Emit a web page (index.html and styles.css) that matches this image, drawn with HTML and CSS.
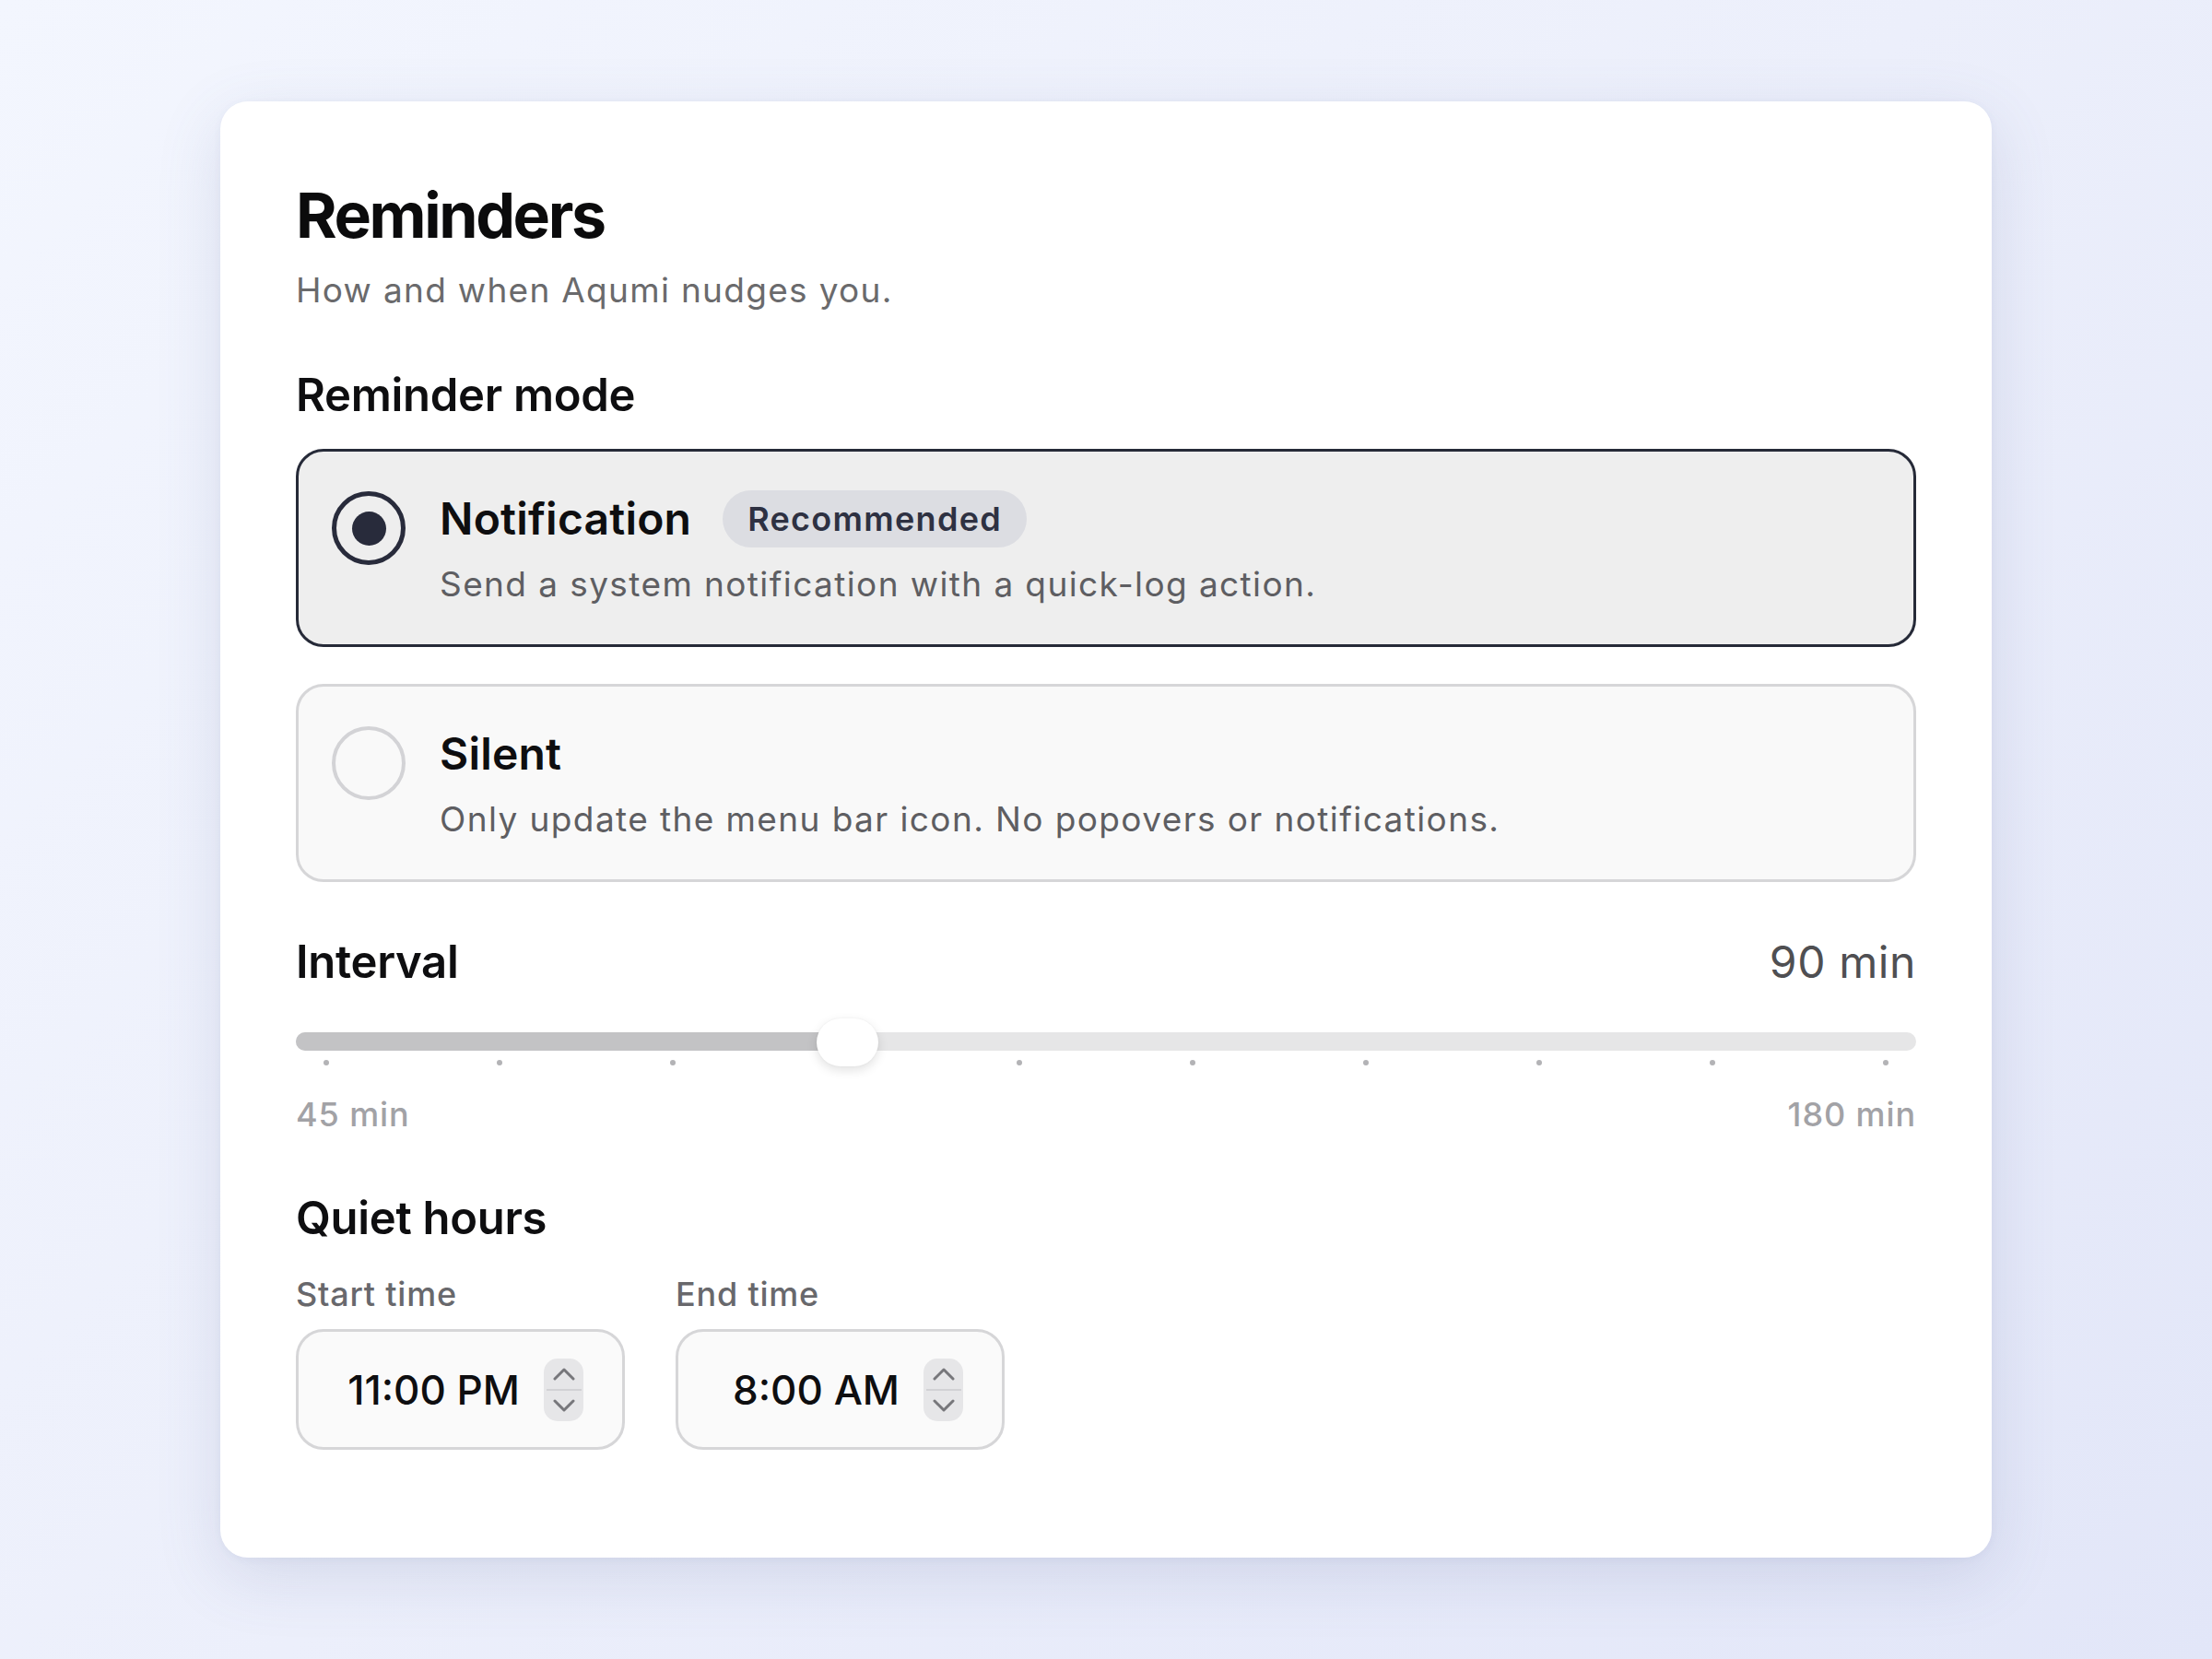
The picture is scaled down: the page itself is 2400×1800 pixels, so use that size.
FILE: index.html
```html
<!DOCTYPE html>
<html lang="en">
<head>
<meta charset="utf-8">
<title>Reminders</title>
<link rel="stylesheet" href="styles.css">
</head>
<body>
<main class="page">
  <section class="card">
    <h1 class="title">Reminders</h1>
    <p class="subtitle">How and when Aqumi nudges you.</p>

    <h2 class="section-title mode-title">Reminder mode</h2>
    <div class="options">
      <div class="option selected">
        <span class="radio"><span class="dot"></span></span>
        <div class="option-text">
          <div class="option-head">
            <span class="option-name">Notification</span>
            <span class="badge">Recommended</span>
          </div>
          <p class="option-desc">Send a system notification with a quick-log action.</p>
        </div>
      </div>
      <div class="option">
        <span class="radio"></span>
        <div class="option-text">
          <div class="option-head">
            <span class="option-name">Silent</span>
          </div>
          <p class="option-desc">Only update the menu bar icon. No popovers or notifications.</p>
        </div>
      </div>
    </div>

    <div class="interval-head">
      <h2 class="section-title">Interval</h2>
      <span class="interval-value">90 min</span>
    </div>
    <div class="slider">
      <div class="track"><div class="fill" style="width: 34%"></div></div>
      <div class="thumb" style="left: calc(34% - 33px)"></div>
      <div class="ticks">
        <span></span><span></span><span></span><span></span><span></span>
        <span></span><span></span><span></span><span></span><span></span>
      </div>
    </div>
    <div class="range-labels">
      <span>45 min</span>
      <span>180 min</span>
    </div>

    <h2 class="section-title quiet-title">Quiet hours</h2>
    <div class="times">
      <div class="time-field">
        <label class="time-label">Start time</label>
        <div class="time-box">
          <span class="time-value">11:00 PM</span>
          <span class="stepper">
            <svg class="chev" viewBox="0 0 24 14" width="24" height="14"><path d="M2 12 L12 2 L22 12" /></svg>
            <span class="divider"></span>
            <svg class="chev" viewBox="0 0 24 14" width="24" height="14"><path d="M2 2 L12 12 L22 2" /></svg>
          </span>
        </div>
      </div>
      <div class="time-field">
        <label class="time-label">End time</label>
        <div class="time-box">
          <span class="time-value">8:00 AM</span>
          <span class="stepper">
            <svg class="chev" viewBox="0 0 24 14" width="24" height="14"><path d="M2 12 L12 2 L22 12" /></svg>
            <span class="divider"></span>
            <svg class="chev" viewBox="0 0 24 14" width="24" height="14"><path d="M2 2 L12 12 L22 2" /></svg>
          </span>
        </div>
      </div>
    </div>
  </section>
</main>
</body>
</html>
```

FILE: styles.css
```css
* { box-sizing: border-box; }

html, body {
  margin: 0;
  padding: 0;
}

body {
  font-family: "Inter", "Liberation Sans", sans-serif;
  background: linear-gradient(135deg, #f3f6fe 0%, #eceffb 50%, #e2e6f8 100%);
  color: #0f0f10;
}

.page {
  width: 2400px;
  height: 1800px;
  display: flex;
  align-items: center;
  justify-content: center;
}

.card {
  width: 1922px;
  height: 1580px;
  background: #ffffff;
  border-radius: 30px;
  padding: 83px 82px 0 82px;
  box-shadow: 0 20px 70px rgba(90, 100, 150, 0.16), 0 2px 8px rgba(90, 100, 150, 0.06);
}

.title {
  margin: 0;
  font-size: 68px;
  line-height: 80px;
  font-weight: 700;
  letter-spacing: -2.4px;
  color: #0b0b0c;
}

.subtitle {
  margin: 18px 0 0 0;
  font-size: 37px;
  line-height: 48px;
  color: #6a6a6c;
  font-weight: 400;
  letter-spacing: 1.3px;
}

.section-title {
  margin: 0;
  font-size: 49px;
  line-height: 60px;
  font-weight: 600;
  letter-spacing: -0.3px;
  color: #0e0e10;
}

.mode-title { margin-top: 60px; }

.options {
  margin-top: 28px;
  display: flex;
  flex-direction: column;
  gap: 40px;
}

.option {
  height: 215px;
  border-radius: 30px;
  border: 3px solid #d6d6d8;
  background: #f9f9f9;
  padding: 42px 37px 0 36px;
  display: flex;
  align-items: flex-start;
  gap: 37px;
}

.option.selected {
  border-color: #262a38;
  background: #eeeeee;
}

.radio {
  flex: none;
  margin-top: 1px;
  width: 80px;
  height: 80px;
  border-radius: 50%;
  border: 4px solid #d3d3d6;
  display: flex;
  align-items: center;
  justify-content: center;
}

.option.selected .radio {
  border: 5px solid #282b3b;
}

.dot {
  width: 37px;
  height: 37px;
  border-radius: 50%;
  background: #282b3b;
}

.option-head {
  height: 62px;
  display: flex;
  align-items: center;
  gap: 34px;
}

.option-name {
  font-size: 48px;
  line-height: 62px;
  font-weight: 600;
  letter-spacing: 0.2px;
  color: #0e0e10;
}

.badge {
  height: 62px;
  padding: 0 27px;
  border-radius: 31px;
  background: #dcdde2;
  color: #2e3142;
  font-size: 36px;
  font-weight: 600;
  line-height: 62px;
  letter-spacing: 1.3px;
}

.option-desc {
  margin: 15px 0 0 0;
  font-size: 37px;
  line-height: 50px;
  color: #5e5e62;
  letter-spacing: 1.4px;
}

.interval-head {
  margin-top: 57px;
  display: flex;
  justify-content: space-between;
  align-items: baseline;
}

.interval-value {
  font-size: 48px;
  line-height: 60px;
  color: #4f4f52;
  font-weight: 400;
  letter-spacing: 0.6px;
}

.slider {
  position: relative;
  margin-top: 26px;
  height: 60px;
  padding-top: 20px;
}

.track {
  height: 20px;
  border-radius: 10px;
  background: #e6e6e7;
  overflow: hidden;
}

.fill {
  height: 100%;
  background: #c3c3c5;
}

.thumb {
  position: absolute;
  top: 5px;
  width: 67px;
  height: 52px;
  border-radius: 26px;
  background: #ffffff;
  box-shadow: 0 4px 12px rgba(0, 0, 0, 0.12), 0 0 2px rgba(0, 0, 0, 0.06);
}

.ticks {
  margin-top: 10px;
  padding: 0 30px;
  display: flex;
  justify-content: space-between;
}

.ticks span {
  width: 6px;
  height: 6px;
  border-radius: 50%;
  background: #b3b3b6;
}

.range-labels {
  margin-top: 27px;
  display: flex;
  justify-content: space-between;
  font-size: 36px;
  line-height: 44px;
  font-weight: 500;
  color: #a2a2a6;
  letter-spacing: 0.9px;
}

.quiet-title { margin-top: 61px; }

.times {
  margin-top: 30px;
  display: flex;
  gap: 55px;
}

.time-field {
  display: flex;
  flex-direction: column;
}

.time-label {
  font-size: 36px;
  line-height: 44px;
  font-weight: 500;
  color: #68686c;
  letter-spacing: 0.8px;
}

.time-box {
  margin-top: 16px;
  width: 357px;
  height: 131px;
  border-radius: 30px;
  border: 3px solid #d6d6d8;
  background: #fafafa;
  display: flex;
  align-items: center;
  justify-content: flex-end;
  padding-right: 42px;
  gap: 26px;
}

.time-value {
  font-size: 44px;
  line-height: 44px;
  font-weight: 500;
  color: #0e0e10;
  letter-spacing: 0;
}

.stepper {
  width: 43px;
  height: 68px;
  border-radius: 15px;
  background: #e6e6e8;
  display: flex;
  flex-direction: column;
  align-items: center;
  justify-content: space-between;
  padding: 10px 0 10px 0;
}

.chev {
  width: 24px;
  height: 14px;
  fill: none;
  stroke: #77777b;
  stroke-width: 3;
  stroke-linecap: round;
  stroke-linejoin: round;
}

.divider {
  width: 38px;
  height: 2px;
  background: #d2d2d5;
}
```
